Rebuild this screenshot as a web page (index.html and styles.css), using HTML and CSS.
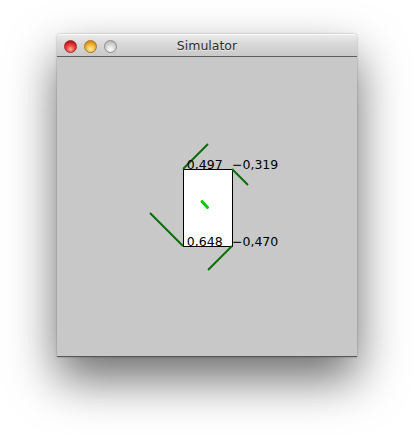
FILE: index.html
```html
<!DOCTYPE html>
<html>
<head>
<meta charset="utf-8">
<title>Simulator</title>
<link rel="stylesheet" href="styles.css">
</head>
<body>
<div class="stage">
  <div class="window">
    <div class="titlebar">
      <div class="lights">
        <span class="light close"></span>
        <span class="light minimize"></span>
        <span class="light zoom"></span>
      </div>
      <div class="title">Simulator</div>
      <div class="spacer"></div>
    </div>
    <div class="content">
      <svg class="canvas" width="300" height="300" viewBox="0 0 300 300">
        <rect class="body" x="126.5" y="112.5" width="49" height="77"/>
        <line class="arm" x1="126" y1="112" x2="151" y2="87"/>
        <line class="arm" x1="175" y1="112" x2="191" y2="128"/>
        <line class="arm" x1="126" y1="189" x2="93" y2="156"/>
        <line class="arm" x1="175" y1="189" x2="151" y2="213"/>
        <line class="heading" x1="145" y1="144.5" x2="150.5" y2="150.5"/>
        <text class="label" x="129.8" y="112">0,497</text>
        <text class="label" x="175" y="112">−0,319</text>
        <text class="label" x="129.8" y="189">0,648</text>
        <text class="label" x="175" y="189">−0,470</text>
      </svg>
    </div>
  </div>
</div>
</body>
</html>
```

FILE: styles.css
```css
html, body {
  margin: 0;
  padding: 0;
  background: #ffffff;
}

.stage {
  padding: 34px 0 0 57px;
  min-height: 436px;
  box-sizing: border-box;
}

.window {
  width: 300px;
  border-radius: 4px 4px 0 0;
  box-shadow: 0 22px 48px rgba(0, 0, 0, 0.58), 0 0 2px rgba(0, 0, 0, 0.35);
  background: #c8c8c8;
}

.titlebar {
  height: 22px;
  display: grid;
  grid-template-columns: 1fr auto 1fr;
  align-items: center;
  border-radius: 4px 4px 0 0;
  background: linear-gradient(#ededed, #dadada 40%, #c9c9c9);
  box-shadow: inset 0 1px 0 rgba(255, 255, 255, 0.8);
  border-bottom: 1px solid #5e5e5e;
}

.lights {
  display: flex;
  gap: 7px;
  padding-left: 7px;
  padding-top: 2px;
}

.light {
  width: 13px;
  height: 13px;
  border-radius: 50%;
  box-sizing: border-box;
}

.close {
  background: radial-gradient(circle at 50% 75%, #ffb0a8 0%, #f0504a 35%, #c8141a 75%, #a60d12 100%);
  border: 1px solid #9e2c2c;
}

.minimize {
  background: radial-gradient(circle at 50% 75%, #fff0a6 0%, #f8be43 40%, #d98a12 80%, #c07a10 100%);
  border: 1px solid #a87328;
}

.zoom {
  background: radial-gradient(circle at 50% 75%, #ffffff 0%, #dcdcdc 40%, #b4b4b4 85%, #a8a8a8 100%);
  border: 1px solid #8d8d8d;
}

.title {
  font-family: "DejaVu Sans", sans-serif;
  font-size: 12.5px;
  color: #2e2e2e;
  text-shadow: 0 1px 0 rgba(255, 255, 255, 0.55);
  padding-top: 1px;
}

.content {
  height: 300px;
  background: #c8c8c8;
  border-bottom: 1px solid #565656;
  box-sizing: border-box;
}

.canvas {
  display: block;
}

.body {
  fill: #ffffff;
  stroke: #000000;
  stroke-width: 1;
}

.arm {
  stroke: #006e00;
  stroke-width: 2;
}

.heading {
  stroke: #00cc00;
  stroke-width: 3;
  stroke-linecap: round;
}

.label {
  font-family: "DejaVu Sans", sans-serif;
  font-size: 12.5px;
  fill: #000000;
}
```
